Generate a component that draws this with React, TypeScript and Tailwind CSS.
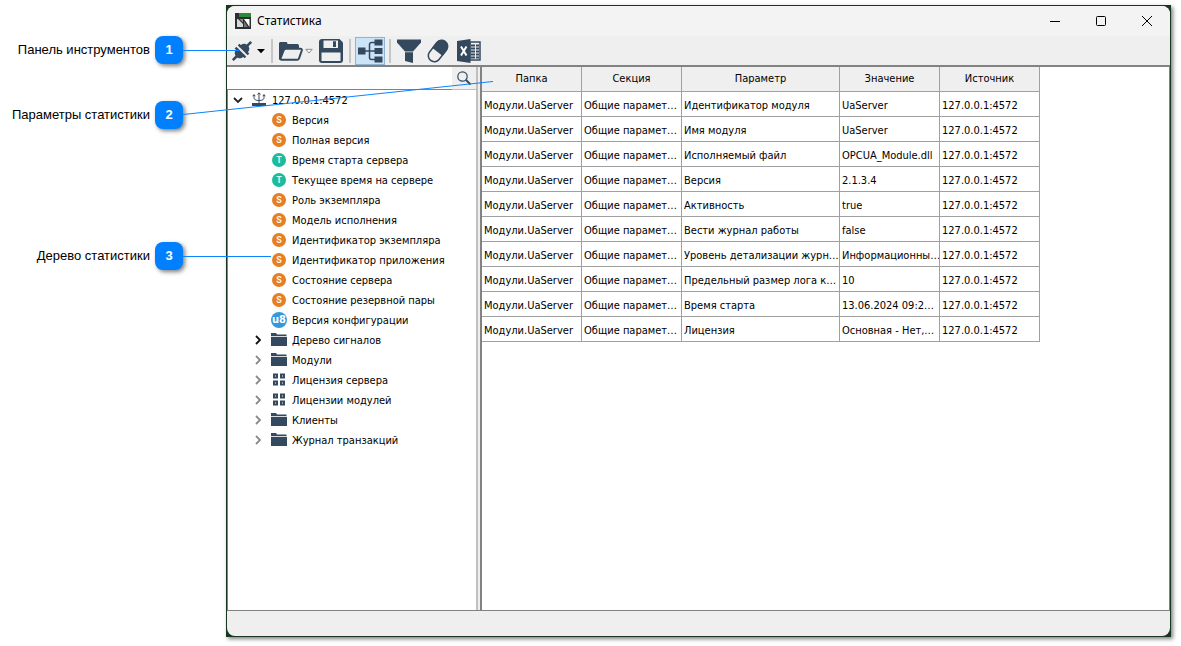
import type { ReactNode } from 'react';

type NodeKind = 'string' | 'time' | 'u8' | 'folder' | 'license';

interface TreeItem {
  label: string;
  kind: NodeKind;
  expandable?: boolean;
  active?: boolean;
}

const treeItems: TreeItem[] = [
  { label: 'Версия', kind: 'string' },
  { label: 'Полная версия', kind: 'string' },
  { label: 'Время старта сервера', kind: 'time' },
  { label: 'Текущее время на сервере', kind: 'time' },
  { label: 'Роль экземпляра', kind: 'string' },
  { label: 'Модель исполнения', kind: 'string' },
  { label: 'Идентификатор экземпляра', kind: 'string' },
  { label: 'Идентификатор приложения', kind: 'string' },
  { label: 'Состояние сервера', kind: 'string' },
  { label: 'Состояние резервной пары', kind: 'string' },
  { label: 'Версия конфигурации', kind: 'u8' },
  { label: 'Дерево сигналов', kind: 'folder', expandable: true, active: true },
  { label: 'Модули', kind: 'folder', expandable: true },
  { label: 'Лицензия сервера', kind: 'license', expandable: true },
  { label: 'Лицензии модулей', kind: 'license', expandable: true },
  { label: 'Клиенты', kind: 'folder', expandable: true },
  { label: 'Журнал транзакций', kind: 'folder', expandable: true },
];

const columns = ['Папка', 'Секция', 'Параметр', 'Значение', 'Источник'];

const parameters = [
  ['Идентификатор модуля', 'UaServer'],
  ['Имя модуля', 'UaServer'],
  ['Исполняемый файл', 'OPCUA_Module.dll'],
  ['Версия', '2.1.3.4'],
  ['Активность', 'true'],
  ['Вести журнал работы', 'false'],
  ['Уровень детализации журн…', 'Информационны…'],
  ['Предельный размер лога к…', '10'],
  ['Время старта', '13.06.2024 09:2…'],
  ['Лицензия', 'Основная - Нет,…'],
];

function Callout({ number, children }: { number: number; children: ReactNode }) {
  return (
    <div className="flex h-7 items-center justify-end gap-[5px] font-['Liberation_Sans',sans-serif] text-[13px] text-black">
      <span className="whitespace-nowrap">{children}</span>
      <span className="flex size-7 items-center justify-center rounded-lg bg-[#007fff] font-bold text-white shadow-[2px_2px_4px_rgba(0,0,0,0.5)]">
        {number}
      </span>
    </div>
  );
}

function Separator() {
  return <div className="h-6 w-[2px] bg-[#c6c6c6]" />;
}

function DropArrow({ hollow = false }: { hollow?: boolean }) {
  return (
    <svg className="h-2 w-2" viewBox="0 0 8 8">
      {hollow ? (
        <path d="M0.8 2.3h6.4L4 6z" fill="#fff" stroke="#8a8a8a" strokeWidth="1" />
      ) : (
        <path d="M0 2h8L4 6.2z" fill="#000" />
      )}
    </svg>
  );
}

function ToolButton({ label, children }: { label: string; children: ReactNode }) {
  return (
    <button type="button" aria-label={label} className="flex items-center gap-[2px]">
      {children}
    </button>
  );
}

function Toolbar() {
  return (
    <div className="flex h-[29px] items-center gap-1.5 bg-[#efefef] pl-1 text-[#34495e]">
      <ToolButton label="Подключение">
        <svg className="size-6" viewBox="0 0 24 24" fill="currentColor">
          <g transform="rotate(-45 11 12)">
            <rect x="-2" y="10.7" width="7" height="2.6" />
            <path d="M10 7v10H7.500C4.800 17 3 14.800 3 12s1.800-5 4.500-5z" />
            <path d="M12 7v10h2.500c2.700 0 4.500-2.200 4.500-5s-1.800-5-4.500-5z" />
            <rect x="17.500" y="10.700" width="6.500" height="2.600" />
            <path d="M7.600 5H10v3H7.600zM7.600 16H10v3H7.600zM12 5h2.400v3H12zM12 16h2.400v3H12z" />
          </g>
        </svg>
        <DropArrow />
      </ToolButton>
      <Separator />
      <ToolButton label="Открыть">
        <svg className="size-6" viewBox="0 0 24 24">
          <path d="M0 19.500V4.500C0 3.600.7 3 1.500 3H7c.8 0 1.400.6 1.400 1.300V5H18c1 0 2 .7 2 1.700V10L8 21H1.500C.7 21 0 20.400 0 19.500z" fill="currentColor" />
          <path
            d="M7.500 9.800h14c1.100 0 1.600.7 1.300 1.700l-2.800 8c-.3.800-1 1.300-1.900 1.300H2.600c-.9 0-1.400-.6-1.100-1.500l3.100-8c.4-1 1.700-1.500 2.900-1.500z"
            fill="#efefef"
            stroke="currentColor"
            strokeWidth="2"
          />
        </svg>
        <DropArrow hollow />
      </ToolButton>
      <ToolButton label="Сохранить">
        <svg className="size-6" viewBox="0 0 24 24">
          <path d="M3 0h17.500L24 3.500V21a3 3 0 0 1-3 3H3a3 3 0 0 1-3-3V3a3 3 0 0 1 3-3z" fill="currentColor" />
          <path d="M4.500 1.500h14.500v7.500H4.500z" fill="#efefef" />
          <path d="M14 2.200h3v5.800h-3z" fill="currentColor" />
          <path d="M2.500 13.500h19V22h-19z" fill="#efefef" />
        </svg>
      </ToolButton>
      <Separator />
      <button
        type="button"
        aria-label="Дерево"
        aria-pressed="true"
        className="-mx-[2px] flex h-7 w-[30px] items-center justify-center border border-[#90b4d4] bg-[#cce4f7]"
      >
        <svg className="h-6 w-[26px]" viewBox="0 0 26 24" fill="currentColor">
          <path d="M1 8.500h7.500v7H1zM17.500 .5h8v6h-8zM17.500 9h8v6h-8zM17.500 17.500h8v6h-8z" />
          <path d="M8 12h10M18 3.500h-3.500a2 2 0 0 0-2 2v13a2 2 0 0 0 2 2H18" fill="none" stroke="currentColor" strokeWidth="1.500" />
        </svg>
      </button>
      <Separator />
      <ToolButton label="Фильтр">
        <svg className="size-6" viewBox="0 0 24 24" fill="currentColor">
          <path d="M0 .5h24v3L16 12.500H8L0 3.500z" />
          <path d="M8 13.300h8V24l-8-2z" />
        </svg>
      </ToolButton>
      <ToolButton label="Очистить">
        <svg className="size-6" viewBox="0 0 24 24">
          <g transform="rotate(38 11 12)">
            <rect x="5" y="0" width="12" height="24" rx="6" fill="#efefef" stroke="currentColor" strokeWidth="1.500" />
            <path d="M4.300 13V6.500a6.700 6.700 0 0 1 13.400 0V13z" fill="currentColor" />
          </g>
        </svg>
      </ToolButton>
      <ToolButton label="Экспорт в Excel">
        <svg className="size-6" viewBox="0 0 24 24">
          <path d="M13 3h10v18H13z" fill="#efefef" stroke="currentColor" strokeWidth="1.500" />
          <path d="M14 6.500h4M14 9.500h4M14 12.500h4M14 15.500h4M14 18.500h4M19 6.500h3M19 9.500h3M19 12.500h3M19 15.500h3M19 18.500h3" stroke="currentColor" strokeWidth="2" />
          <path d="M0 2 13.500 0v24L0 22z" fill="currentColor" />
          <path d="m4 7.500 5.500 9M9.500 7.500l-5.500 9" stroke="#fff" strokeWidth="2" />
        </svg>
      </ToolButton>
    </div>
  );
}

function NodeIcon({ kind }: { kind: NodeKind }) {
  if (kind === 'folder') {
    return (
      <svg className="size-4" viewBox="0 0 16 16">
        <path d="M0 1h5l1 1.500h9.500V4H0z" fill="#34495e" />
        <path d="M0 4.800h16V14H0z" fill="#34495e" />
      </svg>
    );
  }
  if (kind === 'license') {
    return (
      <svg className="size-4" viewBox="0 0 16 16" fill="none" stroke="#34495e" strokeWidth="2">
        <path d="M3 2.500h3v3H3zM10 2.500h3v3h-3zM3 9.500h3v3H3zM10 9.500h3v3h-3z" />
      </svg>
    );
  }
  if (kind === 'u8') {
    return (
      <span className="flex size-4 items-center justify-center rounded-full bg-[#3498db] font-['DejaVu_Sans_Condensed','DejaVu_Sans',sans-serif] text-[11px] leading-4 font-bold text-white">
        u8
      </span>
    );
  }
  return (
    <span
      className={`mx-auto flex size-[14px] items-center justify-center rounded-full font-['Roboto',sans-serif] text-[9px] leading-3 font-bold text-white/90 ${
        kind === 'time' ? 'bg-[#1abc9c]' : 'bg-[#e67e22]'
      }`}
    >
      {kind === 'time' ? 'T' : 'S'}
    </span>
  );
}

function StatisticsTree() {
  return (
    <ul className="flex-1 border-l border-[#828282]">
      <li>
        <div className="flex h-5 items-center pl-1">
          <svg className="mr-[7px] size-3" viewBox="0 0 12 12" fill="none" stroke="#222" strokeWidth="1.800">
            <path d="m2 4 4 4 4-4" />
          </svg>
          <svg className="mr-[5px] size-4" viewBox="0 0 16 16" fill="none" stroke="#34495e">
            <path d="M8 1v10M3 3v2.500C3 7.500 4.500 8.500 8 8.500s5-1 5-3V3M1.800 4.200 3 2.500l1.200 1.700M11.800 4.200 13 2.500l1.200 1.700M6.500 2.500 8 .8l1.500 1.700" />
            <path d="M1 11h14v3H1z" fill="#34495e" stroke="none" />
          </svg>
          <span className="pt-[2px]">127.0.0.1:4572</span>
        </div>
        <ul>
          {treeItems.map((item) => (
            <li key={item.label} className="flex h-5 items-center whitespace-nowrap pl-6">
              <span className="mr-[7px] size-3">
                {item.expandable && (
                  <svg className="size-3" viewBox="0 0 12 12" fill="none" stroke={item.active ? '#111' : '#8a8a8a'} strokeWidth="1.800">
                    <path d="m4 2 4 4-4 4" />
                  </svg>
                )}
              </span>
              <span className="mr-[5px] w-4">
                <NodeIcon kind={item.kind} />
              </span>
              <span className="pt-[2px]">{item.label}</span>
            </li>
          ))}
        </ul>
      </li>
    </ul>
  );
}

function SearchBar() {
  return (
    <div className="flex h-[23px]">
      <input
        type="text"
        aria-label="Поиск"
        className="min-w-0 flex-1 border-b border-[#828282] bg-white px-1 outline-none"
      />
      <button type="button" aria-label="Найти" className="flex w-6 items-center justify-center border-b border-[#c0c0c0] bg-[#efefef]">
        <svg className="size-4" viewBox="0 0 16 16" fill="none" stroke="#34495e">
          <circle cx="6.500" cy="6.500" r="4.700" strokeWidth="1.200" />
          <path d="m10 10 4.500 4.500" strokeWidth="2" />
        </svg>
      </button>
    </div>
  );
}

function ParametersTable() {
  return (
    <table className="w-[558px] table-fixed border-separate border-spacing-0">
      <colgroup>
        <col className="w-[100px]" />
        <col className="w-[100px]" />
        <col className="w-[158px]" />
        <col className="w-[100px]" />
        <col className="w-[100px]" />
      </colgroup>
      <thead>
        <tr>
          {columns.map((column) => (
            <th key={column} className="h-[25px] border-r border-b border-[#a0a0a0] bg-[#efefef] p-0 text-center font-normal">
              {column}
            </th>
          ))}
        </tr>
      </thead>
      <tbody>
        {parameters.map(([name, value]) => (
          <tr key={name}>
            {['Модули.UaServer', 'Общие парамет…', name, value, '127.0.0.1:4572'].map((text, i) => (
              <td key={i} className="h-[25px] overflow-hidden border-r border-b border-[#a0a0a0] pt-[3px] pr-0 pb-0 pl-[2px] whitespace-nowrap">
                {text}
              </td>
            ))}
          </tr>
        ))}
      </tbody>
    </table>
  );
}

function TitleBar() {
  return (
    <header className="flex h-[30px] items-center bg-[#f3f3f3] pl-2">
      <svg className="size-4" viewBox="0 0 16 16">
        <path d="M0 0h16v16H0z" fill="#2b2f33" />
        <path d="M4 0h12v4H4z" fill="#2a8a38" />
        <path d="M2 6h1l5 5v3H2z" fill="#d9d9d9" />
        <path d="M4.500 6H8v3.500z" fill="#8a8d90" />
        <path d="M9 6h5.500v8z" fill="#fff" />
        <path d="M9 8v6h3.800z" fill="#6f7478" />
      </svg>
      <h1 className="ml-[6px] flex-1 font-['Noto_Sans',sans-serif] text-[12px]">Статистика</h1>
      <button type="button" aria-label="Свернуть" className="flex h-full w-[46px] items-center justify-center">
        <svg className="size-3" viewBox="0 0 12 12" stroke="#000">
          <path d="M1 6.500h10" />
        </svg>
      </button>
      <button type="button" aria-label="Развернуть" className="flex h-full w-[46px] items-center justify-center">
        <svg className="size-3" viewBox="0 0 12 12" fill="none" stroke="#000">
          <rect x="1.500" y="1.500" width="9" height="9" rx="1" />
        </svg>
      </button>
      <button type="button" aria-label="Закрыть" className="flex h-full w-[46px] items-center justify-center">
        <svg className="size-3" viewBox="0 0 12 12" stroke="#000">
          <path d="m1 1 10 10M11 1 1 11" />
        </svg>
      </button>
    </header>
  );
}

export default function App() {
  return (
    <main className="relative flex min-h-screen bg-white pt-[5px] pr-[10px] pb-[9px] text-black">
      <aside className="w-[226px] shrink-0 pt-[31px] pr-[43px]">
        <Callout number={1}>Панель инструментов</Callout>
        <div className="pt-[37px] pb-[113px]">
          <Callout number={2}>Параметры статистики</Callout>
        </div>
        <Callout number={3}>Дерево статистики</Callout>
      </aside>

      <section className="flex min-w-0 flex-1 bg-[#17381f] p-px shadow-[2px_2px_4px_rgba(0,0,0,0.5)]">
        <div className="flex min-w-0 flex-1 flex-col overflow-hidden rounded-lg bg-[#efefef] font-['DejaVu_Sans_Condensed','DejaVu_Sans',sans-serif] text-[11px] leading-4">
          <TitleBar />
          <Toolbar />
          <div className="flex flex-1 border-t-2 border-b border-t-[#828282] border-b-[#828282]">
            <div className="flex w-[251px] shrink-0 flex-col border-r-2 border-[#c0c0c0] bg-white">
              <SearchBar />
              <StatisticsTree />
            </div>
            <div className="w-[2px] bg-[#efefef]" />
            <div className="min-w-0 flex-1 border-r border-l-2 border-[#828282] bg-white">
              <ParametersTable />
            </div>
          </div>
          <footer className="h-[25px]" />
        </div>
      </section>

      {/* Leader lines from the callouts to the window parts */}
      <svg className="pointer-events-none absolute top-0 left-0 h-[300px] w-[500px]" viewBox="0 0 500 300" stroke="#0a84ff">
        <path d="M183 50.500h56M183 114.500 493 81.500M183 256.500h88" />
      </svg>
    </main>
  );
}
